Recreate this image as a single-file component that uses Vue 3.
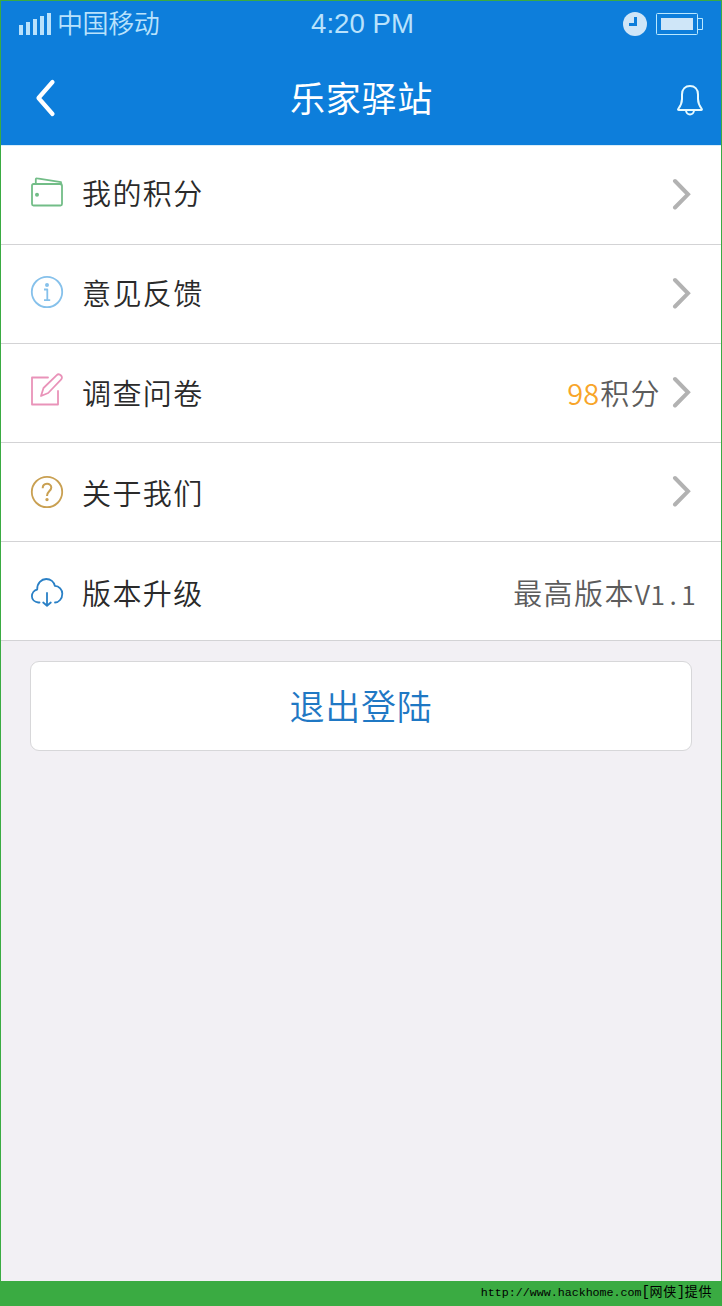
<script setup>
const rows = [
  { id: 'points', label: '我的积分', arrow: true },
  { id: 'feedback', label: '意见反馈', arrow: true },
  { id: 'survey', label: '调查问卷', arrow: true, count: '98', unit: '积分' },
  { id: 'about', label: '关于我们', arrow: true },
  { id: 'version', label: '版本升级', note: '最高版本', version: 'V1.1' },
]
</script>

<template>
  <div class="frame">
    <header class="header">
      <div class="status">
        <div class="carrier">
          <svg class="signal" width="33" height="24" viewBox="0 0 33 24" fill="#b9e2fc">
            <rect x="0" y="13" width="4" height="10" />
            <rect x="7" y="10" width="4" height="13" />
            <rect x="14" y="7" width="4" height="16" />
            <rect x="21" y="4" width="4" height="19" />
            <rect x="28" y="1" width="4" height="22" />
          </svg>
          <span class="operator">中国移动</span>
        </div>
        <span class="time">4:20 PM</span>
        <div class="indicators">
          <svg width="24" height="24" viewBox="0 0 24 24">
            <circle cx="12" cy="12" r="12" fill="#cfe6f8" />
            <path d="M12.500 5v7.500H6" fill="none" stroke="#0d7edb" stroke-width="3" />
          </svg>
          <svg width="48" height="24" viewBox="0 0 48 24">
            <rect x=".5" y="1.500" width="41" height="21" rx="1" fill="none" stroke="#b9e8ff" />
            <path d="M42 6.500h4.500v11H42" fill="none" stroke="#b9e8ff" />
            <rect x="5" y="6" width="32" height="12" fill="#cfe6f8" />
          </svg>
        </div>
      </div>
      <nav class="nav">
        <svg class="back" width="24" height="42" viewBox="0 0 24 42" fill="none" stroke="#fff" stroke-width="4.200" stroke-linecap="round" stroke-linejoin="round">
          <path d="M18.500 5 4.500 21 18.500 37" />
        </svg>
        <h1 class="title">乐家驿站</h1>
        <svg class="bell" width="28" height="32" viewBox="0 0 28 32" fill="none" stroke="#e6faff" stroke-width="2" stroke-linejoin="round">
          <path d="M2.200 25C4.500 22 6 19.500 6 15V10.500C6 5 9.500 2 14 2s8 3 8 8.500V15c0 4.500 1.500 7 3.800 10 .3.600 0 1-.6 1H2.800c-.700 0-1-.4-.6-1Z" />
          <path d="M10 26c0 6 8 6 8 0" />
        </svg>
      </nav>
    </header>

    <ul class="list">
      <li v-for="row in rows" :key="row.id" class="row" :class="row.id">
        <svg class="icon" width="34" height="34" viewBox="0 0 34 34" fill="none" stroke-width="1.800" stroke-linecap="round" stroke-linejoin="round">
          <g v-if="row.id === 'points'" stroke="#72bd87">
            <rect x="2" y="8" width="30" height="21.500" rx="1.500" />
            <path d="M5.800 7.500V3.400c0-.8.6-1.200 1.400-1L31 6.200v2.300" />
            <circle cx="7" cy="18.700" r="1.100" fill="#72bd87" />
          </g>
          <g v-else-if="row.id === 'feedback'" stroke="#86c1eb">
            <circle cx="17" cy="17" r="15.200" />
            <circle cx="17" cy="10" r="1.100" fill="#86c1eb" />
            <path d="M14 14.500H17.300V25M14 25.200h6.200" stroke-linecap="butt" />
          </g>
          <g v-else-if="row.id === 'survey'" stroke="#e993b9">
            <path d="M18 5.500H2V32.500H28V19" />
            <path d="M11 24l2.500-8L26.500 3.300c1.500-1.400 3.300-1 4.500.2s1.300 2.900 0 4.200L18.200 21Z" />
          </g>
          <g v-else-if="row.id === 'about'" stroke="#c9a052">
            <circle cx="17" cy="17" r="15.200" />
            <path d="M12.700 13.200c0-5.700 8.600-5.700 8.600-.7 0 3.500-4.300 3.700-4.300 8.500" stroke-width="2" stroke-linecap="butt" />
            <circle cx="17" cy="24.600" r=".8" fill="#c9a052" />
          </g>
          <g v-else stroke="#2a80c6">
            <path d="M9.500 27.500H8.300C4.500 27.100 1.900 24.500 1.900 21.300c0-3.600 2.500-6.200 5.300-6.800C7 8 11.500 4 16.200 4c4.500 0 7.800 2.900 8.600 6.800 4.400.2 7.500 3.800 7.500 7.900 0 5.100-3.500 8.800-7.300 8.800" />
            <path d="M17 18v12.500M13.200 27.500 17 30.800l3.800-3.300" />
          </g>
        </svg>
        <span class="label">{{ row.label }}</span>
        <span v-if="row.count" class="value"><b class="count">{{ row.count }}</b>{{ row.unit }}</span>
        <span v-if="row.version" class="value">{{ row.note }}<i v-for="(c, i) in row.version" :key="i" class="cell">{{ c }}</i></span>
        <svg v-if="row.arrow" class="arrow" width="20" height="32" viewBox="0 0 20 32" fill="none" stroke="#b2b2b2" stroke-width="4" stroke-linecap="round" stroke-linejoin="miter">
          <path d="M3 3 16 16.300 3 29.500" />
        </svg>
      </li>
    </ul>

    <button class="logout" type="button">退出登陆</button>

    <footer class="footer">
      <span class="url">http://www.hackhome.com</span><span class="mark">[</span><span class="source">网侠</span><span class="mark">]</span><span class="source">提供</span>
    </footer>
  </div>
</template>

<style>
body {
  margin: 0;
}
</style>

<style scoped>
.frame {
  box-sizing: border-box;
  width: 722px;
  height: 1306px;
  display: flex;
  flex-direction: column;
  border: 1px solid #3aab42;
  border-bottom: 0;
  background: #f2f0f4;
  font-family: "Liberation Sans", "Noto Sans CJK SC", sans-serif;
}
.header {
  flex: none;
  height: 144px;
  background: #0d7edb;
  border-bottom: 1px solid #d8edf9;
}
.status {
  display: grid;
  grid-template-columns: 1fr auto 1fr;
  align-items: center;
  height: 46px;
  padding: 0 17px 0 18px;
  color: #b9e2fc;
}
.carrier {
  display: flex;
  align-items: center;
  gap: 5px;
}
.operator {
  margin-top: -4px;
  font: 350 26px/40px "Noto Sans CJK SC", sans-serif;
  letter-spacing: -0.4px;
}
.time {
  margin-left: 2px;
  font-size: 27.600px;
  line-height: 44px;
}
.indicators {
  display: flex;
  justify-content: flex-end;
  gap: 9px;
}
.nav {
  display: grid;
  grid-template-columns: 1fr auto 1fr;
  align-items: center;
  height: 98px;
  padding: 0 17px 0 33px;
}
.title {
  margin: 1px 15px 0 0;
  color: #fff;
  font: 400 35px/50px "Noto Sans CJK SC", sans-serif;
  letter-spacing: 0.8px;
}
.back {
  margin-top: 3px;
}
.bell {
  justify-self: end;
  margin-top: 7px;
}
.list {
  flex: none;
  margin: 0;
  padding: 0;
  list-style: none;
}
.row {
  box-sizing: border-box;
  display: flex;
  align-items: flex-start;
  height: 99px;
  padding: 0 28px 0 29px;
  border-bottom: 1px solid #d3d3d5;
  background: #fff;
  --text-top: 26px;
}
.feedback { --text-top: 27px; }
.survey { --text-top: 28px; }
.about { --text-top: 29px; }
.version { --text-top: 30px; padding-right: 25px; }
.icon {
  flex: none;
  margin-top: 30px;
}
.survey .icon { margin-top: 28px; }
.about .icon { margin-top: 32px; }
.version .icon { margin-top: 33px; }
.label,
.value {
  margin-top: var(--text-top);
  font: 350 29px/40px "Noto Sans CJK SC", sans-serif;
  letter-spacing: 1.400px;
  white-space: nowrap;
}
.label {
  margin-left: 18px;
  margin-right: auto;
  color: #2a2a2a;
}
.value {
  color: #5c5c5c;
}
.count {
  margin-right: 1px;
  color: #f8a529;
  font-weight: 350;
  letter-spacing: 0;
}
.cell {
  display: inline-block;
  width: 15.300px;
  font-size: 27px;
  font-style: normal;
  letter-spacing: 0;
  text-align: center;
}
.arrow {
  flex: none;
  margin: 32px 1px 0 11px;
}
.logout {
  flex: none;
  box-sizing: border-box;
  height: 90px;
  margin: 20px 29px 0;
  padding: 0 0 3px;
  border: 1px solid #d7d7d9;
  border-radius: 9px;
  background: #fff;
  color: #1f78c4;
  font: 350 35px/85px "Noto Sans CJK SC", sans-serif;
  letter-spacing: 0.800px;
}
.footer {
  display: flex;
  align-items: center;
  justify-content: flex-end;
  flex: none;
  height: 25px;
  margin: auto -1px 0;
  padding-right: 10px;
  background: #3aab42;
  color: #000;
}
.url {
  margin-top: -2px;
  font: 11.660px/20px "Liberation Mono", monospace;
}
.mark {
  width: 8px;
  font: 14px/20px "Liberation Mono", monospace;
  margin-top: -4px;
  text-align: center;
}
.source {
  font: 13px/20px "Noto Sans CJK SC", sans-serif;
  letter-spacing: 0.600px;
  margin-top: -6px;
}
</style>
